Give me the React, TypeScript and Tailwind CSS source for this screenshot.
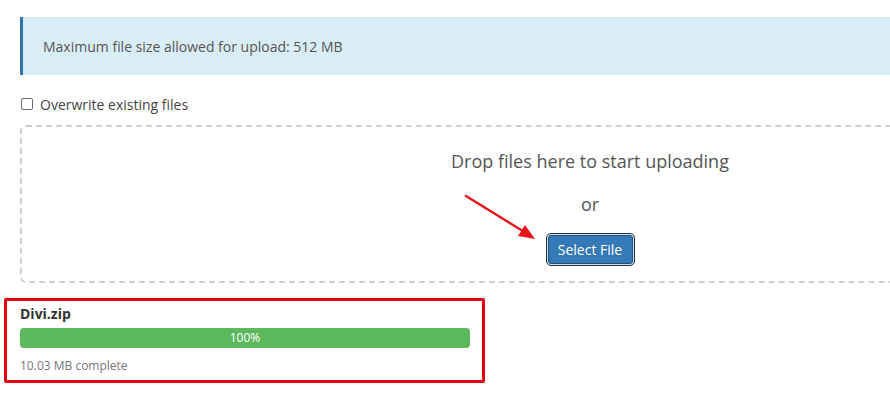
import React from "react";

export default function App() {
  return (
    <div className="w-[890px] h-[420px] overflow-hidden bg-white relative font-['Open_Sans',sans-serif] text-[#555]">
      <div className="w-[1160px] pl-[20px] pt-[17px]">
        <div className="h-[58px] bg-[#d9edf7] border-l-[3px] border-[#3174ad] flex items-center pl-[20px] text-[14px]">
          Maximum file size allowed for upload: 512 MB
        </div>
        <div className="mt-[20px] h-[18px] flex items-center text-[14px]">
          <span className="w-[12px] h-[12px] border border-[#6b6b6b] rounded-[2px] bg-white ml-[1px]" />
          <span className="ml-[7px] text-[#444]">Overwrite existing files</span>
        </div>
        <div className="mt-[12px] border-2 border-dashed border-[#cfcfcf] rounded-[6px] flex flex-col items-center pt-[21px] pb-[15px]">
          <div className="text-[18px] leading-[26px] text-[#555]">Drop files here to start uploading</div>
          <div className="mt-[17px] text-[18px] leading-[26px] text-[#555]">or</div>
          <div className="mt-[16px] rounded-[5px] border border-[#1e2f40] p-[1px] bg-[#cfe0f0]">
            <div className="h-[29px] w-[85px] rounded-[3px] bg-[#337ab7] border border-[#22527c] flex items-center justify-center text-white text-[14px]">
              Select File
            </div>
          </div>
        </div>
        <div className="relative mt-[21px] w-[450px]">
          <div className="text-[14px] leading-[20px] font-bold text-[#333]">Divi.zip</div>
          <div className="mt-[4px] h-[20px] rounded-[4px] bg-[#5cb85c] flex items-center justify-center text-white text-[12px]">
            100%
          </div>
          <div className="mt-[9px] text-[12px] leading-[18px] text-[#777]">10.03 MB complete</div>
          <div className="absolute left-[-16px] top-[-6px] right-[-15px] bottom-[-8px] border-[3px] border-[#e3000f] rounded-[2px]" />
        </div>
      </div>
      <svg className="absolute left-0 top-0" width="890" height="420" viewBox="0 0 890 420">
        <line x1="466" y1="196" x2="526" y2="233" stroke="#e8141a" strokeWidth="2.5" strokeLinecap="round" />
        <polygon points="535,239 518,236 525,225" fill="#e8141a" />
      </svg>
    </div>
  );
}
